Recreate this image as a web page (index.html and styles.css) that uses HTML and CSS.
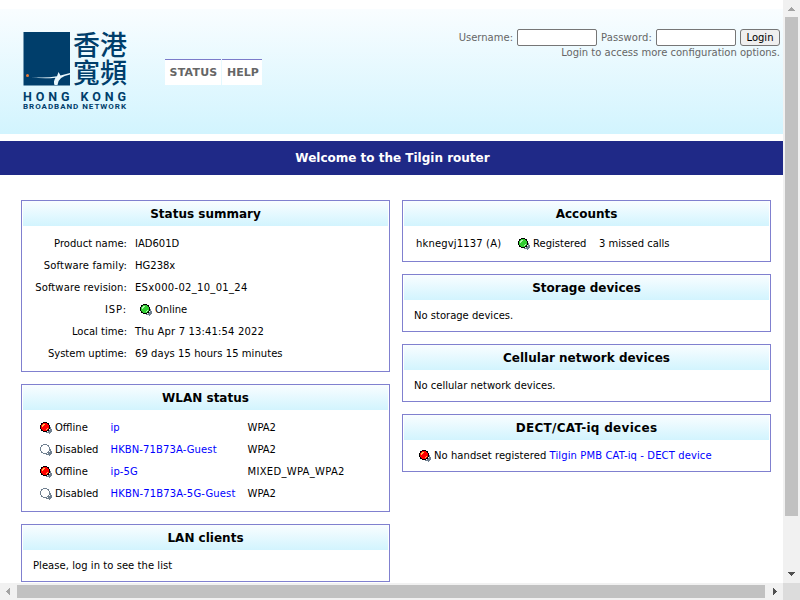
FILE: index.html
```html
<!DOCTYPE html>
<html lang="en">
<head>
<meta charset="utf-8">
<title>Tilgin router</title>
<link rel="stylesheet" href="styles.css">
</head>
<body>
<svg width="0" height="0" class="defs" aria-hidden="true">
  <symbol id="ball" viewBox="0 0 12 12">
    <path d="M10 5h1v2h1v3h-1v1h-1v1H9v-1H6v-1h2V9h1V8h1z" fill="#708090"/>
    <path d="M3 0h4v1h2v2h1v4H9v2H7v1H3V9H1V7H0V3h1V1h2z" class="rim"/>
    <path d="M3 1h4v1h1v1h1v4H8v1H7v1H3V8H2V7H1V3h1V2h1z" class="fill"/>
    <path d="M3 2h2v1H4v1H3v1H2V3h1zM6 7h1V6h1v1H7v1H6z" class="shine"/>
  </symbol>
</svg>
<div class="window">
  <div class="page">
    <header class="header">
      <svg class="logo" width="106" height="80" viewBox="0 0 106 80">
        <rect x=".5" y="1" width="46.5" height="53.5" fill="#003e6b"/>
        <circle cx="4.5" cy="44.500" r="1.500" fill="#ec7a35"/>
        <path d="M8 46Q22 47.500 34 45.300L35.500 41l2 3.500 9.500-2.500v1.500Q35 45.500 34.500 54H31.500q-1.500-3.500 1-7.300Q20 48 8 46z" fill="#e9f7fc"/>
        <g class="han">
          <text x="50" y="23.500" textLength="54" lengthAdjust="spacingAndGlyphs">香港</text>
          <text x="50" y="52" textLength="54" lengthAdjust="spacingAndGlyphs">寬頻</text>
        </g>
        <text class="name" x="0" y="69.500" textLength="103">HONG KONG</text>
        <text class="sub" x="0" y="78" textLength="103">BROADBAND NETWORK</text>
      </svg>
      <nav class="nav"><a class="status">STATUS</a><a class="help">HELP</a></nav>
      <form class="login">
        <div class="fields">
          <label class="user">Username:</label><input type="text">
          <label class="pass">Password:</label><input type="password">
          <button type="button">Login</button>
        </div>
        <p>Login to access more configuration options.</p>
      </form>
    </header>
    <h1>Welcome to the Tilgin router</h1>
    <main>
      <div class="column">
        <section class="summary">
          <h2>Status summary</h2>
          <dl>
            <dt>Product name:</dt><dd>IAD601D</dd>
            <dt class="spaced">Software family:</dt><dd>HG238x</dd>
            <dt class="loose">Software revision:</dt><dd class="wide">ESx000-02_10_01_24</dd>
            <dt class="wide">ISP:</dt><dd class="led"><svg class="ball green"><use href="#ball"/></svg>Online</dd>
            <dt>Local time:</dt><dd class="spaced">Thu Apr 7 13:41:54 2022</dd>
            <dt>System uptime:</dt><dd class="slight">69 days 15 hours 15 minutes</dd>
          </dl>
        </section>
        <section class="wlan">
          <h2>WLAN status</h2>
          <div class="nets">
            <span class="led"><svg class="ball red"><use href="#ball"/></svg>Offline</span><a>ip</a><span>WPA2</span>
            <span class="led"><svg class="ball off"><use href="#ball"/></svg>Disabled</span><a class="loose">HKBN-71B73A-Guest</a><span>WPA2</span>
            <span class="led"><svg class="ball red"><use href="#ball"/></svg>Offline</span><a class="loose">ip-5G</a><span class="wide">MIXED_WPA_WPA2</span>
            <span class="led"><svg class="ball off"><use href="#ball"/></svg>Disabled</span><a class="spaced">HKBN-71B73A-5G-Guest</a><span>WPA2</span>
          </div>
        </section>
        <section class="short"><h2>LAN clients</h2><p class="slight">Please, log in to see the list</p></section>
      </div>
      <div class="column">
        <section class="accounts">
          <h2>Accounts</h2>
          <div class="account"><span class="spaced">hknegvj1137 (A)</span><span class="led"><svg class="ball green"><use href="#ball"/></svg>Registered</span><span>3 missed calls</span></div>
        </section>
        <section class="short"><h2>Storage devices</h2><p>No storage devices.</p></section>
        <section class="short"><h2>Cellular network devices</h2><p>No cellular network devices.</p></section>
        <section class="short"><h2 class="wide">DECT/CAT-iq devices</h2><p class="led dect"><svg class="ball red"><use href="#ball"/></svg><span class="slight">No handset registered </span><a class="loose">Tilgin PMB CAT-iq - DECT device</a></p></section>
      </div>
    </main>
  </div>
  <div class="vbar">
    <svg width="17" height="17"><path d="M5 11h7v-1h-1V9h-1V8H9V7H8v1H7v1H6v1H5z" fill="#a3a3a3"/></svg>
    <div class="vthumb"></div>
    <svg class="end" width="17" height="17"><path d="M5 6h7v1h-1v1h-1v1H9v1H8V9H7V8H6V7H5z" fill="#505050"/></svg>
  </div>
  <div class="hbar">
    <svg width="17" height="17"><path d="M10 5v7H9v-1H8v-1H7V9H6V8h1V7h1V6h1V5z" fill="#a3a3a3"/></svg>
    <div class="hthumb"></div>
    <svg class="end" width="17" height="17"><path d="M7 5v7h1v-1h1v-1h1V9h1V8h-1V7H9V6H8V5z" fill="#505050"/></svg>
  </div>
  <div class="corner"></div>
</div>
</body>
</html>
```
FILE: styles.css
```css
* { box-sizing: border-box; }
body { margin: 0; overflow: hidden; background: #fff; color: #000; font: 10px/14px Verdana, "DejaVu Sans", sans-serif; }
p, h1, h2, dl, dd { margin: 0; }
a { color: #00f; text-decoration: none; }
.slight { letter-spacing: .05px; }
.loose { letter-spacing: .11px; }
.spaced { letter-spacing: .15px; }
.wide { letter-spacing: .3px; }
.defs { display: block; }
.window { display: grid; grid-template: 583px 17px / 783px 17px; width: 800px; height: 600px; }
.page { overflow: hidden; padding-top: 9px; }

.header { display: flex; align-items: flex-start; height: 125px; padding: 0 3px 0 23px; background: linear-gradient(#f9fdff, #d2f4fe); color: #666; }
.logo { margin-top: 22px; overflow: visible; }
.logo text { fill: #003e6b; }
.han { font: 500 27px "Noto Sans CJK TC", sans-serif; }
.name { font: bold 12.5px Roboto, sans-serif; }
.sub { font: bold 8px Roboto, sans-serif; }
.nav { display: flex; gap: 1px; margin: 50px 0 0 36px; font: bold 11px/26px Verdana, "DejaVu Sans", sans-serif; }
.nav a { height: 26px; border-top: 1px solid #7b7bca; background: #fff; color: #666; text-align: center; white-space: nowrap; }
.status { width: 56px; padding-left: 1px; letter-spacing: .2px; }
.help { width: 40px; padding-left: 2px; }
.login { margin: 20px 0 0 auto; text-align: right; }
.fields { display: flex; align-items: center; justify-content: flex-end; height: 17px; }
.fields label { margin-right: 4px; }
.fields .pass { letter-spacing: .1px; }
.fields input { width: 80px; height: 17px; margin: 0 4px 0 0; padding: 0; border: 1px solid #767676; border-radius: 2px; background: #fff; }
.fields button { width: 40px; height: 17px; padding: 0; border: 1px solid #767676; border-radius: 3px; background: #efefef; color: #000; font: 10px/14px Verdana, "DejaVu Sans", sans-serif; }

h1 { height: 34px; margin-top: 7px; background: #1f2987; color: #fff; font-size: 12px; line-height: 34px; text-align: center; padding-left: 2px; }
main { display: flex; gap: 12px; padding: 25px 0 0 21px; }
.column { display: flex; flex-direction: column; gap: 12px; width: 369px; }
section { border: 1px solid #8080cf; padding: 0 1px; background: #fff; }
h2 { height: 25px; padding-top: 1px; background: linear-gradient(#f9fdff, #d2f4fe); font-size: 12px; line-height: 25px; text-align: center; }
section > * { white-space: nowrap; }
.summary { height: 172px; }
.wlan { height: 128px; }
.short { height: 58px; }
.accounts { height: 62px; }
.short p { padding: 9px 0 0 10px; }
dl { display: grid; grid-template-columns: 104px 1fr; grid-auto-rows: 22px; column-gap: 8px; padding-top: 7px; line-height: 22px; }
dt { text-align: right; }
dt.wide { letter-spacing: .8px; }
dd.led { padding-left: 5px; }
.led { display: flex; align-items: center; }
.ball { flex: none; width: 12px; height: 12px; margin-right: 3px; shape-rendering: crispEdges; }
.green { --rim: #000; --fill: #32cd32; --shine: #b4f5b4; }
.red { --rim: #000; --fill: #f00; --shine: #ffc04d; }
.off { --rim: #708090; --fill: #fff; --shine: #fff; }
.rim { fill: var(--rim); }
.fill { fill: var(--fill); }
.shine { fill: var(--shine); }
.nets { display: grid; grid-template-columns: 70.500px 137px 1fr; grid-auto-rows: 22px; padding: 7px 0 0 17px; line-height: 22px; }
.account { display: grid; grid-template-columns: 102px 81px 1fr; padding: 7px 0 0 12px; line-height: 22px; }
.short .dect { padding-left: 15px; white-space: pre; }

.vbar { display: flex; flex-direction: column; background: #f1f1f1; }
.vthumb { width: 13px; height: 499px; margin-left: 2px; background: #c1c1c1; }
.hbar { display: flex; background: #f1f1f1; }
.hthumb { width: 748px; height: 13px; margin-top: 2px; background: #c1c1c1; }
.vbar .end { margin-top: auto; }
.hbar .end { margin-left: auto; }
.corner { background: #dcdcdc; }
```
